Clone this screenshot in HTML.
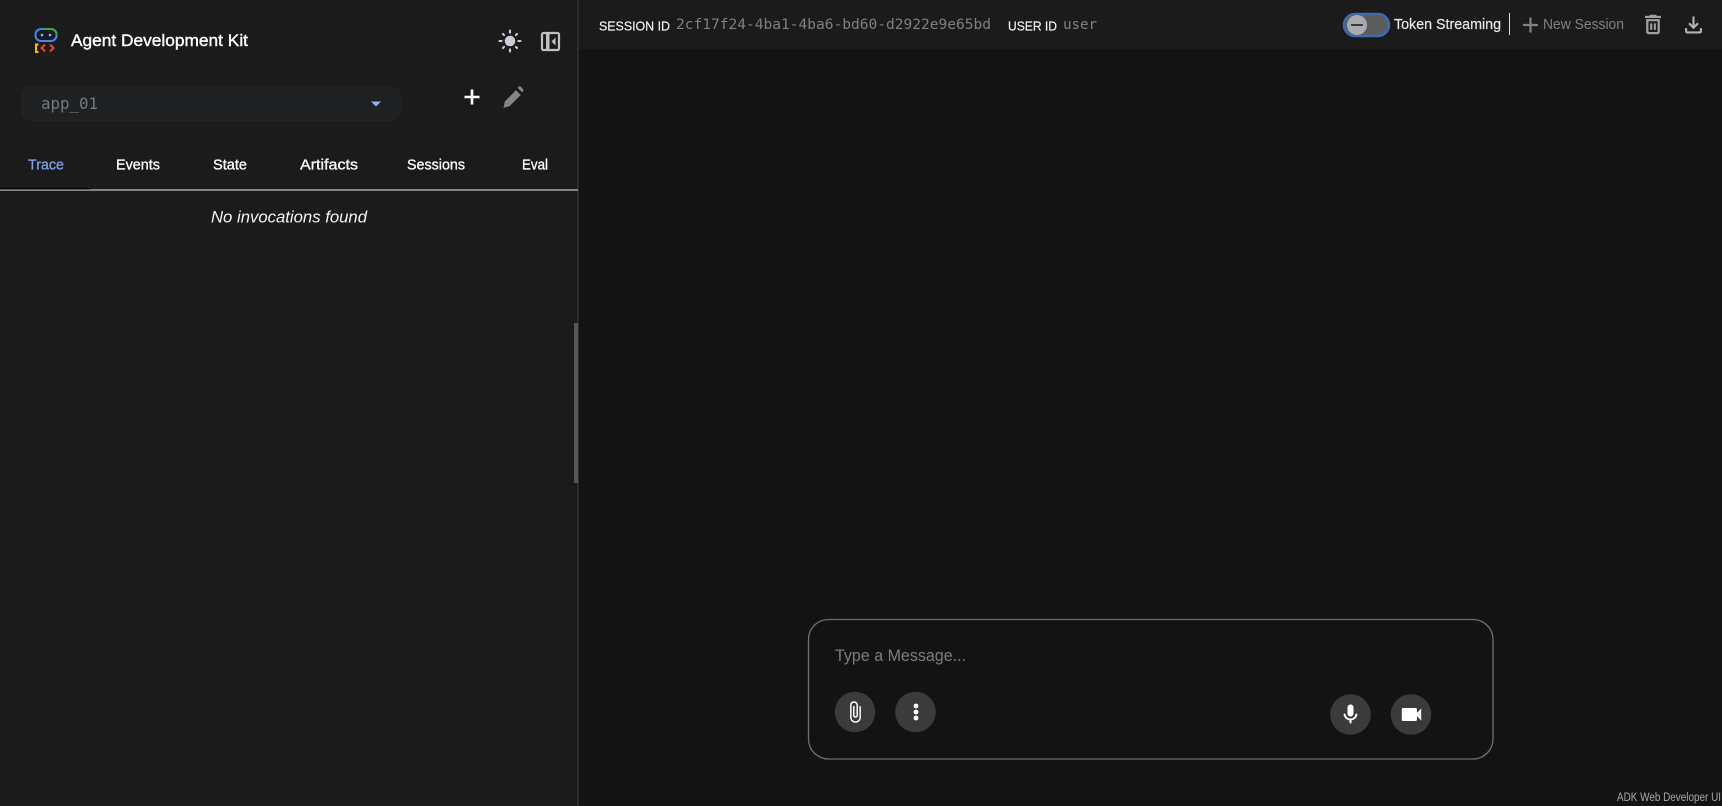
<!DOCTYPE html>
<html><head><meta charset="utf-8"><title>Agent Development Kit</title>
<style>
html,body{margin:0;padding:0;background:#131313;width:1722px;height:806px;overflow:hidden}
svg{display:block;filter:blur(.35px)}
text{font-family:"Liberation Sans",sans-serif;dominant-baseline:central}
.m{font-family:"DejaVu Sans Mono","Liberation Mono",monospace}
</style></head><body>
<svg width="1722" height="806" viewBox="0 0 1722 806" xmlns="http://www.w3.org/2000/svg">
<rect width="1722" height="806" fill="#131313"/>
<rect x="578" width="1144" height="49" fill="#1b1b1b"/>
<rect width="578" height="806" fill="#1b1b1b"/>
<rect x="577" width="2" height="806" fill="#2c2c2c"/>
<rect x="574" y="323" width="4" height="160" fill="#55585c"/>

<!-- logo -->
<path d="M41 29h10a5.500 5.500 0 0 1 5.500 5.500v1a5.500 5.500 0 0 1-5.500 5.500H41a5.500 5.500 0 0 1-5.500-5.500v-1A5.500 5.500 0 0 1 41 29z" fill="none" stroke="#4285f4" stroke-width="2"/>
<path d="M44 29h7a5.500 5.500 0 0 1 5.500 5.500" fill="none" stroke="#34a853" stroke-width="2"/>
<circle cx="42" cy="35" r="1.300" fill="#8ab4f8"/><circle cx="50" cy="35" r="1.300" fill="#8ab4f8"/>
<path d="M38.500 44.500h-2.500v7.500h2.500" fill="none" stroke="#fbbc04" stroke-width="2"/>
<path d="M45 44.500l-3.500 3.500 3.500 3.500M50 44.500l3.500 3.500-3.500 3.500" fill="none" stroke="#ea4335" stroke-width="2"/>
<text x="71" y="40.500" font-size="17" fill="#fff" stroke="#fff" stroke-width=".4" textLength="177" lengthAdjust="spacingAndGlyphs">Agent Development Kit</text>

<g transform="translate(510 41) scale(1.05) translate(-12 -12)" fill="#c9ced6"><path d="M12 7c-2.760 0-5 2.240-5 5s2.240 5 5 5 5-2.240 5-5-2.240-5-5-5zM2 13h2c.55 0 1-.45 1-1s-.45-1-1-1H2c-.55 0-1 .45-1 1s.45 1 1 1zm18 0h2c.55 0 1-.45 1-1s-.45-1-1-1h-2c-.55 0-1 .45-1 1s.45 1 1 1zM11 2v2c0 .55.45 1 1 1s1-.45 1-1V2c0-.55-.45-1-1-1s-1 .45-1 1zm0 18v2c0 .55.45 1 1 1s1-.45 1-1v-2c0-.55-.45-1-1-1s-1 .45-1 1zM5.990 4.580c-.39-.39-1.030-.39-1.410 0-.39.39-.39 1.030 0 1.410l1.060 1.060c.39.39 1.030.39 1.410 0s.39-1.030 0-1.410L5.990 4.580zm12.370 12.370c-.39-.39-1.030-.39-1.410 0-.39.39-.39 1.030 0 1.410l1.060 1.060c.39.39 1.030.39 1.410 0 .39-.39.39-1.030 0-1.410l-1.060-1.060zm1.060-10.960c.39-.39.39-1.030 0-1.410-.39-.39-1.030-.39-1.410 0l-1.060 1.060c-.39.39-.39 1.030 0 1.410s1.030.39 1.410 0l1.060-1.060zM7.050 18.360c.39-.39.39-1.030 0-1.410-.39-.39-1.030-.39-1.410 0l-1.060 1.060c-.39.39-.39 1.030 0 1.410s1.030.39 1.410 0l1.060-1.060z"/></g>
<rect x="542" y="33" width="17" height="17" rx="1.500" fill="none" stroke="#c0c0c0" stroke-width="2.200"/>
<rect x="546" y="33" width="3.500" height="17" fill="#c0c0c0"/>
<path d="M555.500 37.500v8l-4-4z" fill="#c0c0c0"/>

<!-- select -->
<rect x="21" y="86" width="380" height="35" rx="10" fill="#202123"/>
<text class="m" x="41" y="103.500" font-size="16" fill="#77797c" textLength="57" lengthAdjust="spacingAndGlyphs">app_01</text>
<path d="M371 101.500h10l-5 5z" fill="#8ab4f8"/>
<path d="M472 89.500v15M464.500 97h15" stroke="#fff" stroke-width="2.600" fill="none"/>
<g fill="#858585">
<path d="M503.500 106.800l1.300-6.300 11.200-11.200 4.700 4.700-11.200 11.200z" transform="translate(0 1)"/>
<path d="M517.600 87.800l1-1a1.500 1.500 0 0 1 2.100 0l2.300 2.300a1.500 1.500 0 0 1 0 2.100l-1 1z"/>
</g>

<!-- tabs -->
<g font-size="14.500" fill="#fff" stroke="#fff" stroke-width=".3">
<text x="28" y="165.500" fill="#7ba3e6" stroke="#7ba3e6" textLength="36" lengthAdjust="spacingAndGlyphs">Trace</text>
<text x="116" y="165.500" textLength="44" lengthAdjust="spacingAndGlyphs">Events</text>
<text x="213" y="165.500" textLength="34" lengthAdjust="spacingAndGlyphs">State</text>
<text x="300" y="165.500" textLength="58" lengthAdjust="spacingAndGlyphs">Artifacts</text>
<text x="407" y="165.500" textLength="58" lengthAdjust="spacingAndGlyphs">Sessions</text>
<text x="522" y="165.500" textLength="26" lengthAdjust="spacingAndGlyphs">Eval</text>
</g>
<rect x="0" y="189" width="578" height="2" fill="#858585"/>
<rect x="0" y="188" width="91" height="1.300" fill="#000"/>
<text x="211" y="217" font-size="17" font-style="italic" fill="#f4f4f4" textLength="156" lengthAdjust="spacingAndGlyphs">No invocations found</text>

<!-- header -->
<text x="599" y="26" font-size="13" fill="#f1f1f1" stroke="#f1f1f1" stroke-width=".2" textLength="71" lengthAdjust="spacingAndGlyphs">SESSION ID</text>
<text class="m" x="676" y="25" font-size="14" fill="#7d8084" textLength="315" lengthAdjust="spacingAndGlyphs">2cf17f24-4ba1-4ba6-bd60-d2922e9e65bd</text>
<text x="1008" y="26" font-size="13" fill="#f1f1f1" stroke="#f1f1f1" stroke-width=".2" textLength="49" lengthAdjust="spacingAndGlyphs">USER ID</text>
<text class="m" x="1063" y="25" font-size="14" fill="#7d8084" textLength="34" lengthAdjust="spacingAndGlyphs">user</text>

<rect x="1344" y="14" width="45" height="22" rx="11" fill="#5d5d5d" stroke="#3b6cb0" stroke-width="2.500"/>
<circle cx="1357" cy="25" r="10" fill="#a8abb0"/>
<rect x="1351" y="24" width="12" height="2" fill="#3a3a3a"/>
<text x="1394" y="24.500" font-size="15" fill="#e8e8e8" stroke="#e8e8e8" stroke-width=".2" textLength="107" lengthAdjust="spacingAndGlyphs">Token Streaming</text>
<rect x="1509" y="13" width="1" height="22" fill="#e0e0e0"/>
<path d="M1530.500 17.500v15M1523 25h15" stroke="#7f8285" stroke-width="2.200" fill="none"/>
<text x="1543" y="24.500" font-size="15" fill="#7f8285" textLength="81" lengthAdjust="spacingAndGlyphs">New Session</text>
<g transform="translate(1653 24.500) scale(1.14 1.08) translate(-12 -12)" fill="#a0a0a0"><path d="M6 19c0 1.100.9 2 2 2h8c1.100 0 2-.9 2-2V7H6v12zM8 9h8v10H8V9zm7.500-5l-1-1h-5l-1 1H5v2h14V4z"/><path d="M9.500 11h1.800v6H9.500zm3.200 0h1.800v6h-1.800z"/></g>
<g transform="translate(1693.500 25) scale(1.060) translate(-12 -12)" fill="#b4b4b4"><path d="M18 15v3H6v-3H4v3c0 1.100.9 2 2 2h12c1.100 0 2-.9 2-2v-3h-2zm-1-4l-1.410-1.410L13 12.170V4h-2v8.170L8.410 9.590 7 11l5 5 5-5z"/></g>

<!-- input -->
<rect x="808.500" y="619.500" width="684.500" height="139.500" rx="20" fill="#131313" stroke="#6f6f6f" stroke-width="1.300"/>
<text x="835" y="656" font-size="16.500" fill="#7d7d7d" textLength="131" lengthAdjust="spacingAndGlyphs">Type a Message...</text>
<circle cx="855" cy="712" r="20.300" fill="#3a3b3c"/>
<circle cx="915.500" cy="712" r="20.300" fill="#3a3b3c"/>
<circle cx="1350.500" cy="714.500" r="20.300" fill="#3a3b3c"/>
<circle cx="1411" cy="714.500" r="20.300" fill="#3a3b3c"/>
<g transform="translate(855.500 712) scale(.98) translate(-12.500 -12)" fill="#fff"><path d="M16.500 6v11.500c0 2.210-1.790 4-4 4s-4-1.790-4-4V5c0-1.380 1.120-2.500 2.500-2.500s2.500 1.120 2.500 2.500v10.500c0 .55-.45 1-1 1s-1-.45-1-1V6H10v9.500c0 1.380 1.120 2.500 2.500 2.500s2.500-1.120 2.500-2.500V5c0-2.210-1.790-4-4-4S7 2.790 7 5v12.500c0 3.040 2.460 5.500 5.500 5.500s5.500-2.460 5.500-5.500V6h-1.500z"/></g>
<circle cx="916" cy="706" r="2.400" fill="#fff"/><circle cx="916" cy="712" r="2.400" fill="#fff"/><circle cx="916" cy="718" r="2.400" fill="#fff"/>
<g transform="translate(1350.500 714) scale(1) translate(-12 -11.500)" fill="#fff"><path d="M12 14c1.660 0 3-1.340 3-3V5c0-1.660-1.340-3-3-3S9 3.340 9 5v6c0 1.660 1.340 3 3 3zm5.910-3c-.49 0-.9.36-.98.85C16.520 14.200 14.470 16 12 16s-4.520-1.800-4.930-4.150c-.08-.49-.49-.85-.98-.85-.61 0-1.090.54-1 1.140.49 3 2.890 5.350 5.910 5.780V20c0 .55.45 1 1 1s1-.45 1-1v-2.080c3.020-.43 5.420-2.780 5.910-5.780.1-.6-.39-1.140-1-1.140z"/></g>
<g transform="translate(1411.500 714.500) scale(1.080) translate(-12 -12)" fill="#fff"><path d="M17 10.500V7c0-.55-.45-1-1-1H4c-.55 0-1 .45-1 1v10c0 .55.45 1 1 1h12c.55 0 1-.45 1-1v-3.500l4 4v-11l-4 4z"/></g>
<text x="1617" y="798" font-size="11.500" fill="#a8a8a8" textLength="104" lengthAdjust="spacingAndGlyphs">ADK Web Developer UI</text>
</svg>
</body></html>
